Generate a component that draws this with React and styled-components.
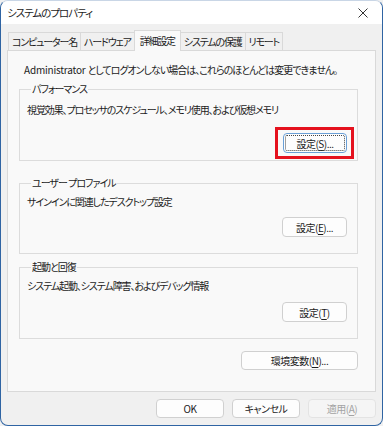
import styled, { createGlobalStyle, css } from 'styled-components';

const GlobalStyle = createGlobalStyle`
  html, body {
    margin: 0;
    padding: 0;
    background: #f0f0f0;
  }
  * {
    box-sizing: border-box;
  }
`;

const Window = styled.div`
  width: 383px;
  height: 426px;
  display: flex;
  flex-direction: column;
  border: 1px solid #2f64a3;
  border-top-color: #c9d6e6;
  border-radius: 8px;
  overflow: hidden;
  background: #f0f0f0;
  font-family: "Noto Sans CJK JP", "Noto Sans", sans-serif;
  font-size: 10px;
  font-feature-settings: "palt";
  letter-spacing: -1px;
  color: #1b1b1b;
`;

const TitleBar = styled.div`
  height: 23px;
  flex: none;
  display: flex;
  align-items: center;
  justify-content: space-between;
  padding: 0 14px 0 6px;
  background: #ffffff;
`;

const Title = styled.span`
  font-size: 10.5px;
`;

const CloseIcon = styled.svg`
  width: 10px;
  height: 10px;
  color: #333;
`;

const Body = styled.div`
  flex: 1;
  display: flex;
  flex-direction: column;
  padding: 8px 6px 0 6px;
`;

const TabStrip = styled.div`
  display: flex;
  align-items: flex-end;
  height: 18px;
  padding-left: 1px;
`;

const Tab = styled.div`
  height: 18px;
  display: flex;
  align-items: center;
  padding: 0 3px;
  margin-right: -1px;
  border: 1px solid #d9d9d9;
  border-bottom: none;
  background: #f0f0f0;
  letter-spacing: -1.2px;
  white-space: nowrap;

  ${(p) =>
    p.$active &&
    css`
      position: relative;
      z-index: 1;
      height: 21px;
      margin-bottom: -1px;
      padding: 0 5px 1px;
      background: #f9f9f9;
    `}
`;

const Panel = styled.div`
  height: 342px;
  border: 1px solid #d9d9d9;
  background: #f9f9f9;
  padding: 0 17px 0 11px;
  display: flex;
  flex-direction: column;
`;

const Notice = styled.p`
  margin: 11px 0 0;
  padding-left: 5px;
  line-height: 16px;
  white-space: nowrap;

  span {
    letter-spacing: -0.2px;
  }
`;

const Group = styled.fieldset`
  margin: ${(p) => p.$top}px 0 0;
  padding: 0 10px ${(p) => p.$bottom}px 7px;
  border: 1px solid #dcdcdc;
  min-width: 0;
`;

const Legend = styled.legend`
  margin-left: 4px;
  padding: 0 1px;
  line-height: 16px;
`;

const Description = styled.div`
  margin-top: ${(p) => p.$top}px;
  line-height: 16px;
  letter-spacing: -1.1px;
  white-space: nowrap;
`;

const ButtonRow = styled.div`
  display: flex;
  justify-content: flex-end;
  gap: 8px;
  margin-top: ${(p) => p.$top}px;
`;

const Button = styled.button`
  position: relative;
  width: ${(p) => p.$width}px;
  height: ${(p) => p.$height || 20}px;
  padding: 0;
  border: 1px solid #d0d0d0;
  border-radius: 4px;
  background: #fdfdfd;
  font: inherit;
  letter-spacing: -0.5px;
  color: #1b1b1b;
  display: flex;
  align-items: center;
  justify-content: center;

  u {
    text-underline-offset: 2px;
  }

  &:disabled {
    color: #a3a3a3;
    background: #f5f5f5;
    border-color: #e3e3e3;
  }

  ${(p) =>
    p.$focused &&
    css`
      border-color: #6a9fd6;
      outline: 1px dotted #444;
      outline-offset: -3px;
    `}

  ${(p) =>
    p.$highlight &&
    css`
      &::after {
        content: '';
        position: absolute;
        inset: -7px -8px -7px -9px;
        border: 3px solid #e5121e;
        pointer-events: none;
      }
    `}
`;

const Footer = styled.div`
  display: flex;
  justify-content: flex-end;
  gap: 8px;
  padding: 7px 0 0;
`;

const tabs = ['コンピューター名', 'ハードウェア', '詳細設定', 'システムの保護', 'リモート'];

export default function App() {
  return (
    <>
      <GlobalStyle />
      <Window>
        <TitleBar>
          <Title>システムのプロパティ</Title>
          <CloseIcon viewBox="0 0 10 10">
            <path d="M0.5 0.5L9.5 9.5M9.5 0.5L0.5 9.5" stroke="currentColor" strokeWidth="1" />
          </CloseIcon>
        </TitleBar>
        <Body>
          <TabStrip>
            {tabs.map((t) => (
              <Tab key={t} $active={t === '詳細設定'}>
                {t}
              </Tab>
            ))}
          </TabStrip>
          <Panel>
            <Notice>
              <span>Administrator </span>としてログオンしない場合は、これらのほとんどは変更できません。
            </Notice>

            <Group $top={3} $bottom={7}>
              <Legend>パフォーマンス</Legend>
              <Description $top={5}>視覚効果、プロセッサのスケジュール、メモリ使用、および仮想メモリ</Description>
              <ButtonRow $top={15}>
                <Button $width={64} $focused $highlight>
                  設定(<u>S</u>)...
                </Button>
              </ButtonRow>
            </Group>

            <Group $top={14} $bottom={16}>
              <Legend>ユーザー プロファイル</Legend>
              <Description $top={3}>サインインに関連したデスクトップ設定</Description>
              <ButtonRow $top={7}>
                <Button $width={65}>
                  設定(<u>E</u>)...
                </Button>
              </ButtonRow>
            </Group>

            <Group $top={5} $bottom={16}>
              <Legend>起動と回復</Legend>
              <Description $top={3}>システム起動、システム障害、およびデバッグ情報</Description>
              <ButtonRow $top={8}>
                <Button $width={65}>
                  設定(<u>T</u>)
                </Button>
              </ButtonRow>
            </Group>

            <ButtonRow $top={12}>
              <Button $width={117} $height={19}>
                環境変数(<u>N</u>)...
              </Button>
            </ButtonRow>
          </Panel>
          <Footer>
            <Button $width={68} $height={19}>OK</Button>
            <Button $width={68} $height={19}>キャンセル</Button>
            <Button $width={68} $height={19} disabled>
              適用(<u>A</u>)
            </Button>
          </Footer>
        </Body>
      </Window>
    </>
  );
}
